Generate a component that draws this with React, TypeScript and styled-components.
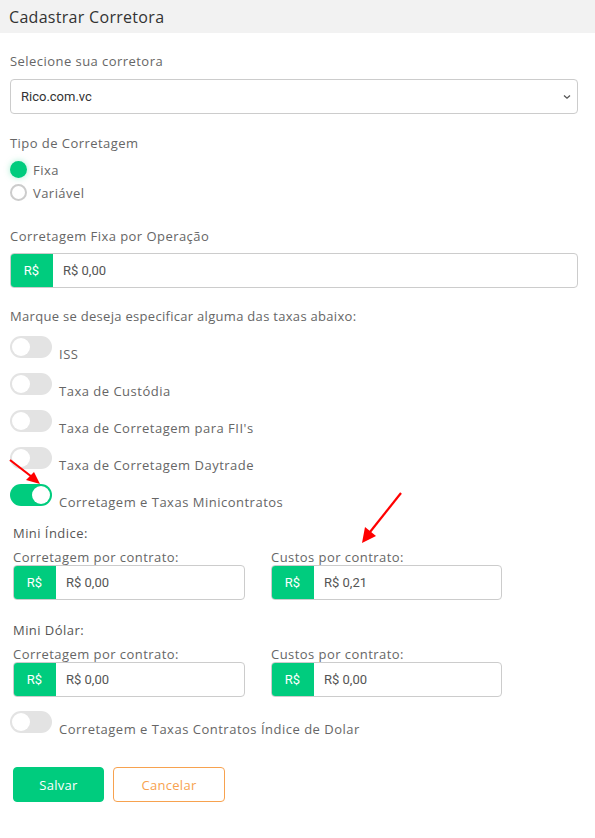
import React from "react";
import styled, { createGlobalStyle } from "styled-components";

const GREEN = "#00cc7e";

const Global = createGlobalStyle`
  html, body { margin: 0; padding: 0; background: #fff; }
  body { font-family: "Open Sans", "Liberation Sans", sans-serif; color: #666; }
  * { box-sizing: border-box; }
`;

const Page = styled.div`
  position: relative;
  width: 595px;
  min-height: 838px;
  background: #fff;
`;

const Header = styled.div`
  height: 33px;
  background: #f2f2f2;
  padding-left: 9px;
  display: flex;
  align-items: center;
  font-size: 16px;
  color: #333;
  letter-spacing: 0.3px;
`;

const Body = styled.div`
  padding: 0 17px 0 10px;
  display: flex;
  flex-direction: column;
`;

const Label = styled.div<{ $top?: number; $ls?: number }>`
  font-size: 13px;
  line-height: 16px;
  color: #666;
  margin-top: ${(p) => p.$top ?? 0}px;
  letter-spacing: ${(p) => p.$ls ?? 0.45}px;
`;

const SelectBox = styled.div`
  margin-top: 10px;
  height: 35px;
  border: 1px solid #ccc;
  border-radius: 4px;
  display: flex;
  align-items: center;
  justify-content: space-between;
  padding: 0 6px 0 10px;
  font-family: Roboto, "Liberation Sans", sans-serif;
  font-size: 13px;
  color: #333;
`;

const RadioList = styled.div`
  margin-top: 7px;
  display: flex;
  flex-direction: column;
`;

const RadioRow = styled.div`
  height: 23px;
  display: flex;
  align-items: center;
  gap: 6px;
  font-size: 13px;
  color: #666;
  letter-spacing: 0.45px;
`;

const RadioDot = styled.span<{ $on?: boolean }>`
  width: 17px;
  height: 17px;
  border-radius: 50%;
  background: ${(p) => (p.$on ? GREEN : "#fff")};
  border: ${(p) => (p.$on ? "none" : "2px solid #ccc")};
  box-shadow: ${(p) => (p.$on ? "0 0 6px rgba(0,204,126,0.35)" : "none")};
`;

const Group = styled.div<{ $top?: number; $width?: string }>`
  margin-top: ${(p) => p.$top ?? 0}px;
  width: ${(p) => p.$width ?? "100%"};
  height: 35px;
  display: flex;
  border: 1px solid #ccc;
  border-radius: 4px;
  overflow: hidden;
`;

const Addon = styled.div`
  width: 43px;
  margin: -1px 0 -1px -1px;
  background: ${GREEN};
  color: #fff;
  display: flex;
  align-items: center;
  justify-content: center;
  font-family: Roboto, "Liberation Sans", sans-serif;
  font-size: 13px;
`;

const Value = styled.div`
  flex: 1;
  display: flex;
  align-items: center;
  padding-left: 10px;
  font-family: Roboto, "Liberation Sans", sans-serif;
  font-size: 13px;
  color: #555;
`;

const ToggleList = styled.div<{ $top: number }>`
  margin-top: ${(p) => p.$top}px;
  display: flex;
  flex-direction: column;
  gap: 15px;
`;

const ToggleRow = styled.div`
  display: flex;
  align-items: flex-end;
  gap: 7px;
  font-size: 13px;
  color: #666;
  letter-spacing: 0.5px;
`;

const ToggleText = styled.span`
  line-height: 16px;
  margin-bottom: -4px;
`;

const Toggle = styled.span<{ $on?: boolean }>`
  position: relative;
  width: 42px;
  height: 22px;
  border-radius: 11px;
  background: ${(p) => (p.$on ? GREEN : "#e3e3e3")};
  flex-shrink: 0;
  &::after {
    content: "";
    position: absolute;
    top: 2px;
    left: ${(p) => (p.$on ? "22px" : "2px")};
    width: 18px;
    height: 18px;
    border-radius: 50%;
    background: #fff;
  }
`;

const Section = styled.div`
  padding-left: 3px;
  margin-top: 19px;
  display: flex;
  flex-direction: column;
`;

const SectionTitle = styled.div<{ $top?: number }>`
  font-size: 13px;
  line-height: 16px;
  color: #555;
  margin-top: ${(p) => p.$top ?? 0}px;
  letter-spacing: 0.45px;
`;

const Columns = styled.div`
  margin-top: 8px;
  display: grid;
  grid-template-columns: 232px 231px;
  column-gap: 26px;
`;

const Field = styled.div`
  display: flex;
  flex-direction: column;
`;

const FieldLabel = styled.div`
  font-size: 13px;
  line-height: 16px;
  color: #666;
  letter-spacing: 0.45px;
`;

const Buttons = styled.div`
  margin-top: 34px;
  padding-left: 13px;
  display: flex;
  gap: 9px;
`;

const Button = styled.button<{ $primary?: boolean }>`
  height: 35px;
  width: ${(p) => (p.$primary ? "91px" : "112px")};
  border-radius: 4px;
  font-family: "Open Sans", "Liberation Sans", sans-serif;
  font-size: 13px;
  letter-spacing: 0.3px;
  background: ${(p) => (p.$primary ? GREEN : "#fff")};
  color: ${(p) => (p.$primary ? "#fff" : "#f7a24f")};
  border: 1px solid ${(p) => (p.$primary ? GREEN : "#f7a24f")};
  padding: 0;
`;

const Arrow = styled.svg<{ $x: number; $y: number }>`
  position: absolute;
  left: ${(p) => p.$x}px;
  top: ${(p) => p.$y}px;
  overflow: visible;
  pointer-events: none;
`;

const Chevron = () => (
  <svg width="8" height="6" viewBox="0 0 8 6">
    <path d="M1 1.5 L4 4.2 L7 1.5" fill="none" stroke="#555" strokeWidth="1.3" />
  </svg>
);

const MoneyInput = ({ value, top, width }: { value: string; top?: number; width?: string }) => (
  <Group $top={top} $width={width}>
    <Addon>R$</Addon>
    <Value>{value}</Value>
  </Group>
);

const toggles: [string, boolean][] = [
  ["ISS", false],
  ["Taxa de Custódia", false],
  ["Taxa de Corretagem para FII's", false],
  ["Taxa de Corretagem Daytrade", false],
  ["Corretagem e Taxas Minicontratos", true],
];

export default function App() {
  return (
    <Page>
      <Global />
      <Header>Cadastrar Corretora</Header>
      <Body>
        <Label $top={20}>Selecione sua corretora</Label>
        <SelectBox>
          <span>Rico.com.vc</span>
          <Chevron />
        </SelectBox>

        <Label $top={21}>Tipo de Corretagem</Label>
        <RadioList>
          <RadioRow>
            <RadioDot $on />
            Fixa
          </RadioRow>
          <RadioRow>
            <RadioDot />
            Variável
          </RadioRow>
        </RadioList>

        <Label $top={24}>Corretagem Fixa por Operação</Label>
        <MoneyInput value="R$ 0,00" top={9} />

        <Label $top={20} $ls={0.3}>
          Marque se deseja especificar alguma das taxas abaixo:
        </Label>
        <ToggleList $top={12}>
          {toggles.map(([t, on]) => (
            <ToggleRow key={t}>
              <Toggle $on={on} />
              <ToggleText>{t}</ToggleText>
            </ToggleRow>
          ))}
        </ToggleList>

        <Section>
          <SectionTitle>Mini Índice:</SectionTitle>
          <Columns>
            <Field>
              <FieldLabel>Corretagem por contrato:</FieldLabel>
              <MoneyInput value="R$ 0,00" />
            </Field>
            <Field>
              <FieldLabel>Custos por contrato:</FieldLabel>
              <MoneyInput value="R$ 0,21" />
            </Field>
          </Columns>
          <SectionTitle $top={22}>Mini Dólar:</SectionTitle>
          <Columns>
            <Field>
              <FieldLabel>Corretagem por contrato:</FieldLabel>
              <MoneyInput value="R$ 0,00" />
            </Field>
            <Field>
              <FieldLabel>Custos por contrato:</FieldLabel>
              <MoneyInput value="R$ 0,00" />
            </Field>
          </Columns>
        </Section>

        <ToggleList $top={14}>
          <ToggleRow>
            <Toggle />
            <ToggleText>Corretagem e Taxas Contratos Índice de Dolar</ToggleText>
          </ToggleRow>
        </ToggleList>
      </Body>
      <Buttons>
        <Button $primary>Salvar</Button>
        <Button>Cancelar</Button>
      </Buttons>

      <Arrow $x={8} $y={458} width="34" height="28" viewBox="0 0 34 28">
        <line x1="2" y1="2" x2="24" y2="19" stroke="#f00" strokeWidth="2.2" />
        <polygon points="32,26 18,22 26,14" fill="#f00" />
      </Arrow>
      <Arrow $x={360} $y={491} width="44" height="54" viewBox="0 0 44 54">
        <line x1="41" y1="2" x2="10" y2="41" stroke="#f00" strokeWidth="2.2" />
        <polygon points="2,52 5,36 16,45" fill="#f00" />
      </Arrow>
    </Page>
  );
}
